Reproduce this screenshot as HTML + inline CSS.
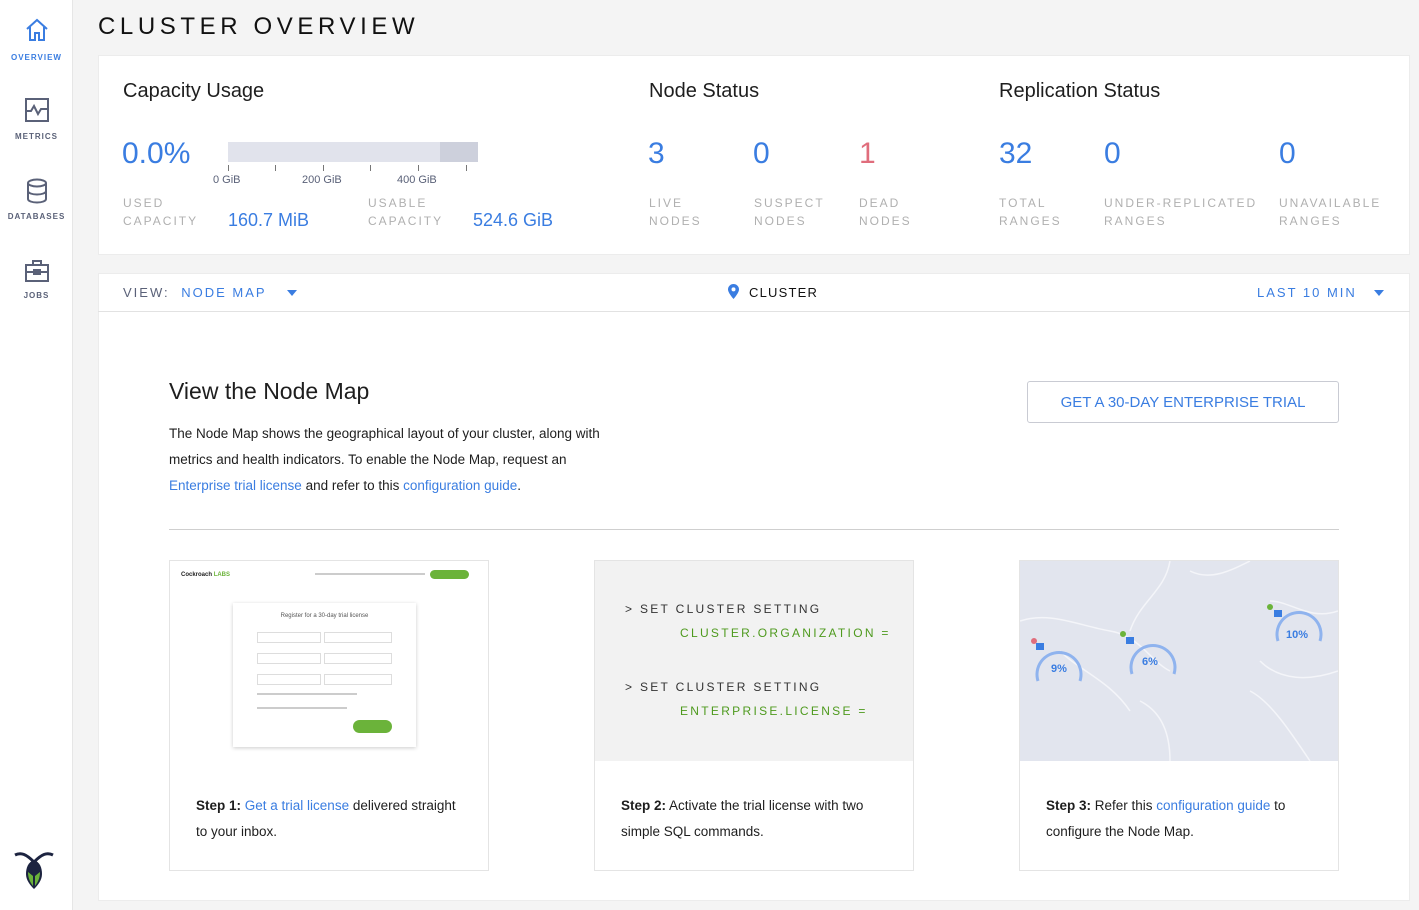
<!DOCTYPE html>
<html><head><meta charset="utf-8"><style>
*{box-sizing:border-box;margin:0;padding:0}
body{width:1419px;height:910px;background:#f4f4f4;font-family:"Liberation Sans",sans-serif;position:relative;overflow:hidden;color:#1e1e1e}
.abs{position:absolute}
.side{left:0;top:0;width:73px;height:910px;background:#fff;border-right:1px solid #e6e6e6}
.nav{position:absolute;left:0;width:73px;text-align:center;font-size:8px;letter-spacing:1px;font-weight:bold;color:#5a6178}
.card{background:#fff;border:1px solid #ececec}
.lbl{font-size:12px;letter-spacing:2px;color:#b0b0b0;line-height:18px}
.big{font-size:30px;color:#3a7de1}
.blue{color:#3a7de1}
.tick{position:absolute;top:165px;width:1px;height:6px;background:#777}
.ax{position:absolute;top:174px;font-size:11px;color:#5a6178}
p.t{font-size:13.5px;line-height:26px}
.step{position:absolute;top:560px;width:320px;height:311px;border:1px solid #e4e4e4;background:#fff}
.step .txt{position:absolute;left:26px;top:232px;font-size:13.5px;line-height:26px;width:272px}
.sql{font-family:"Liberation Sans",sans-serif;font-size:12px;letter-spacing:2.3px;position:absolute}
</style></head><body>
<div class="abs side"></div>
<div class="nav" style="top:18px;color:#3a7de1">
<svg width="24" height="24" viewBox="0 0 24 24" fill="none" stroke="#3a7de1" stroke-width="2"><path d="M2 11L12 2l10 9M5 9v13h5v-7h4v7h5V9"/></svg><div style="margin-top:9px">OVERVIEW</div></div>
<div class="nav" style="top:98px"><svg width="24" height="24" viewBox="0 0 24 24" fill="none" stroke="#5a6178" stroke-width="2"><rect x="1" y="1" width="22" height="22"/><path d="M1 13h5l3-5 4 8 3-5h7"/></svg><div style="margin-top:8px">METRICS</div></div>
<div class="nav" style="top:178px"><svg width="24" height="26" viewBox="0 0 24 26" fill="none" stroke="#5a6178" stroke-width="2"><ellipse cx="12" cy="5" rx="9" ry="3.5"/><path d="M3 5v16c0 2 4 3.5 9 3.5s9-1.5 9-3.5V5M3 13c0 2 4 3.5 9 3.5s9-1.5 9-3.5"/></svg><div style="margin-top:6px">DATABASES</div></div>
<div class="nav" style="top:259px"><svg width="24" height="24" viewBox="0 0 24 24" fill="none" stroke="#5a6178" stroke-width="2"><rect x="1" y="6" width="22" height="16"/><path d="M8 6V2h8v4M1 13h22"/><rect x="9" y="11" width="6" height="4"/></svg><div style="margin-top:6px">JOBS</div></div>
<svg class="abs" style="left:14px;top:850px" width="40" height="42" viewBox="0 0 40 42"><path d="M1 5c6-3 11-1 19 7 8-8 13-10 19-7" fill="none" stroke="#1c2340" stroke-width="3"/><path d="M20 10c-6 2-8 8-8 14 0 6 4 11 8 15 4-4 8-9 8-15 0-6-2-12-8-14z" fill="#1c2340"/><path d="M14 22c0 6 2 10 5 14V26zM26 22c0 6-2 10-5 14V26z" fill="#6bb33a"/></svg>

<div class="abs" style="left:98px;top:13px;font-size:24px;letter-spacing:4.6px;color:#111">CLUSTER OVERVIEW</div>

<div class="abs card" style="left:98px;top:55px;width:1312px;height:200px"></div>
<div class="abs" style="left:123px;top:80px;font-size:20px">Capacity Usage</div>
<div class="abs" style="left:649px;top:80px;font-size:20px">Node Status</div>
<div class="abs" style="left:999px;top:80px;font-size:20px">Replication Status</div>
<div class="abs big" style="left:122px;top:137px">0.0%</div>
<div class="abs" style="left:228px;top:142px;width:250px;height:20px;background:#e1e3ec"></div>
<div class="abs" style="left:440px;top:142px;width:38px;height:20px;background:#cdd0dc"></div>
<div class="tick" style="left:228px"></div><div class="tick" style="left:275px"></div><div class="tick" style="left:323px"></div><div class="tick" style="left:370px"></div><div class="tick" style="left:418px"></div><div class="tick" style="left:466px"></div>
<div class="ax" style="left:213px">0 GiB</div><div class="ax" style="left:302px">200 GiB</div><div class="ax" style="left:397px">400 GiB</div>
<div class="abs lbl" style="left:123px;top:194px">USED<br>CAPACITY</div>
<div class="abs blue" style="left:228px;top:210px;font-size:18px">160.7 MiB</div>
<div class="abs lbl" style="left:368px;top:194px">USABLE<br>CAPACITY</div>
<div class="abs blue" style="left:473px;top:210px;font-size:18px">524.6 GiB</div>

<div class="abs big" style="left:648px;top:137px">3</div>
<div class="abs big" style="left:753px;top:137px">0</div>
<div class="abs big" style="left:859px;top:137px;color:#e06d7c">1</div>
<div class="abs lbl" style="left:649px;top:194px">LIVE<br>NODES</div>
<div class="abs lbl" style="left:754px;top:194px">SUSPECT<br>NODES</div>
<div class="abs lbl" style="left:859px;top:194px">DEAD<br>NODES</div>
<div class="abs big" style="left:999px;top:137px">32</div>
<div class="abs big" style="left:1104px;top:137px">0</div>
<div class="abs big" style="left:1279px;top:137px">0</div>
<div class="abs lbl" style="left:999px;top:194px">TOTAL<br>RANGES</div>
<div class="abs lbl" style="left:1104px;top:194px">UNDER-REPLICATED<br>RANGES</div>
<div class="abs lbl" style="left:1279px;top:194px">UNAVAILABLE<br>RANGES</div>

<div class="abs card" style="left:98px;top:273px;width:1312px;height:628px"></div>
<div class="abs" style="left:98px;top:311px;width:1312px;height:1px;background:#e2e2e2"></div>
<div class="abs" style="left:123px;top:285px;font-size:13px;letter-spacing:2px;color:#5a6178">VIEW: <span class="blue" style="margin-left:6px">NODE MAP</span></div>
<svg class="abs" style="left:287px;top:290px" width="10" height="6"><path d="M0 0h10L5 6z" fill="#3a7de1"/></svg>
<svg class="abs" style="left:728px;top:284px" width="11" height="15" viewBox="0 0 11 15"><path d="M5.5 0C2.5 0 0 2.4 0 5.4 0 9 5.5 15 5.5 15S11 9 11 5.4C11 2.4 8.5 0 5.5 0z" fill="#3a7de1"/><circle cx="5.5" cy="5.4" r="2" fill="#fff"/></svg>
<div class="abs" style="left:749px;top:285px;font-size:13px;letter-spacing:1.2px;color:#111">CLUSTER</div>
<div class="abs blue" style="left:1257px;top:285px;font-size:13px;letter-spacing:2px">LAST 10 MIN</div>
<svg class="abs" style="left:1374px;top:290px" width="10" height="6"><path d="M0 0h10L5 6z" fill="#3a7de1"/></svg>

<div class="abs" style="left:169px;top:378px;font-size:23px">View the Node Map</div>
<div class="abs" style="left:169px;top:421px;width:460px"><p class="t">The Node Map shows the geographical layout of your cluster, along with metrics and health indicators. To enable the Node Map, request an <span class="blue">Enterprise trial license</span> and refer to this <span class="blue">configuration guide</span>.</p></div>
<div class="abs blue" style="left:1027px;top:381px;width:312px;height:42px;border:1px solid #c9cbd3;border-radius:3px;font-size:15px;text-align:center;line-height:41px">GET A 30-DAY ENTERPRISE TRIAL</div>
<div class="abs" style="left:169px;top:529px;width:1170px;height:1px;background:#cfcfcf"></div>

<div class="step" style="left:169px">
 <div class="abs" style="left:11px;top:11px;font-size:6px;font-weight:bold">Cockroach <span style="color:#6bb33a">LABS</span></div>
 <div class="abs" style="left:145px;top:12px;width:110px;height:2px;background:#ccc"></div>
 <div class="abs" style="left:260px;top:9px;width:39px;height:9px;border-radius:5px;background:#6bb33a"></div>
 <div class="abs" style="left:63px;top:42px;width:183px;height:144px;background:#fff;box-shadow:0 1px 4px rgba(0,0,0,.2)">
  <div style="font-size:6px;text-align:center;margin-top:10px;color:#555">Register for a 30-day trial license</div>
  <div class="abs" style="left:24px;top:29px;width:64px;height:11px;border:1px solid #ddd"></div><div class="abs" style="left:91px;top:29px;width:68px;height:11px;border:1px solid #ddd"></div>
  <div class="abs" style="left:24px;top:50px;width:64px;height:11px;border:1px solid #ddd"></div><div class="abs" style="left:91px;top:50px;width:68px;height:11px;border:1px solid #ddd"></div>
  <div class="abs" style="left:24px;top:71px;width:64px;height:11px;border:1px solid #ddd"></div><div class="abs" style="left:91px;top:71px;width:68px;height:11px;border:1px solid #ddd"></div>
  <div class="abs" style="left:24px;top:90px;width:100px;height:2px;background:#ccc"></div>
  <div class="abs" style="left:24px;top:104px;width:90px;height:2px;background:#ccc"></div>
  <div class="abs" style="left:120px;top:117px;width:39px;height:13px;border-radius:7px;background:#6bb33a"></div>
 </div>
 <div class="txt"><b>Step 1:</b> <span class="blue">Get a trial license</span> delivered straight to your inbox.</div>
</div>
<div class="step" style="left:594px">
 <div class="abs" style="left:0;top:0;width:318px;height:200px;background:#f2f2f2"></div>
 <div class="sql" style="left:30px;top:41px;color:#333">&gt; SET CLUSTER SETTING</div>
 <div class="sql" style="left:85px;top:65px;color:#4e9a1e">CLUSTER.ORGANIZATION =</div>
 <div class="sql" style="left:30px;top:119px;color:#333">&gt; SET CLUSTER SETTING</div>
 <div class="sql" style="left:85px;top:143px;color:#4e9a1e">ENTERPRISE.LICENSE =</div>
 <div class="txt"><b>Step 2:</b> Activate the trial license with two simple SQL commands.</div>
</div>
<div class="step" style="left:1019px">
 <svg class="abs" style="left:0;top:0" width="318" height="200"><rect width="318" height="200" fill="#e2e5ee"/>
 <g fill="none" stroke="#f4f5f9" stroke-width="1.5"><path d="M0 60c30-10 60 5 90 10s40 30 60 40M40 90c20 20 50 30 70 60M150 0c-5 30-30 40-40 70M170 10c20 10 40 0 60-10M250 40c20 0 40 20 68 10M240 100c20 20 50 20 78 10M120 140c20 10 30 30 30 60M230 130c20 10 40 40 60 70"/></g>
 <g fill="none" stroke="#8fb3ee" stroke-width="3"><path d="M18 120a22 22 0 1 1 42 0"/><path d="M112 113a22 22 0 1 1 42 0"/><path d="M258 80a22 22 0 1 1 42 0"/></g>
 <g fill="#3a7de1" font-family="Liberation Sans" font-weight="bold"><text x="31" y="111" font-size="11">9%</text><text x="122" y="104" font-size="11">6%</text><text x="266" y="77" font-size="11">10%</text></g>
 <circle cx="14" cy="80" r="3" fill="#e06d7c"/><circle cx="103" cy="73" r="3" fill="#6bb33a"/><circle cx="250" cy="46" r="3" fill="#6bb33a"/>
 <rect x="16" y="82" width="8" height="7" fill="#3a7de1"/><rect x="106" y="76" width="8" height="7" fill="#3a7de1"/><rect x="254" y="49" width="8" height="7" fill="#3a7de1"/>
 </svg>
 <div class="txt"><b>Step 3:</b> Refer this <span class="blue">configuration guide</span> to configure the Node Map.</div>
</div>
</body></html>
